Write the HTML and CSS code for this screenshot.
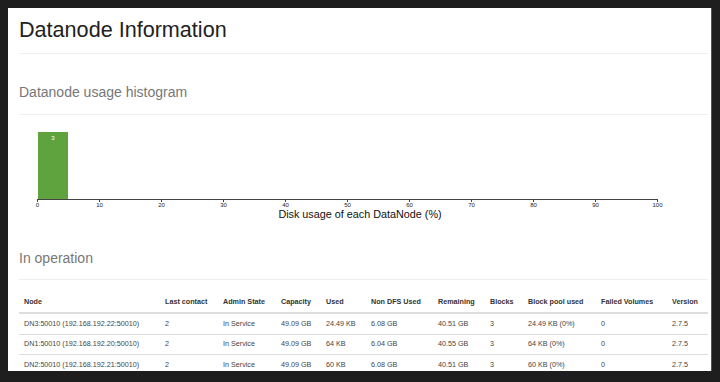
FILE: index.html
```html
<!DOCTYPE html>
<html>
<head>
	<title>Datanode Information</title>
	<link rel="stylesheet" href="styles.css">
</head>
<body>
<div class="panel">
  <div class="page-header">
    <h1>Datanode Information</h1>
  </div>

  <h2 class="section-title">Datanode usage histogram</h2>
  <svg class="histogram" width="689" height="110" viewBox="0 0 689 110">
    <g class="bar">
      <rect x="19" y="17" width="30" height="67"></rect>
      <text x="34" y="25" text-anchor="middle">3</text>
    </g>
    <g class="axis">
      <path d="M18.5,87V84.5H638.5V87"></path>
      <line x1="18.5" y1="84" x2="18.5" y2="87"></line>
      <line x1="80.5" y1="84" x2="80.5" y2="87"></line>
      <line x1="142.5" y1="84" x2="142.5" y2="87"></line>
      <line x1="204.5" y1="84" x2="204.5" y2="87"></line>
      <line x1="266.5" y1="84" x2="266.5" y2="87"></line>
      <line x1="328.5" y1="84" x2="328.5" y2="87"></line>
      <line x1="390.5" y1="84" x2="390.5" y2="87"></line>
      <line x1="452.5" y1="84" x2="452.5" y2="87"></line>
      <line x1="514.5" y1="84" x2="514.5" y2="87"></line>
      <line x1="576.5" y1="84" x2="576.5" y2="87"></line>
      <line x1="638.5" y1="84" x2="638.5" y2="87"></line>
      <g class="tick-labels" text-anchor="middle">
        <text x="18.5" y="91.5">0</text>
        <text x="80.5" y="91.5">10</text>
        <text x="142.5" y="91.5">20</text>
        <text x="204.5" y="91.5">30</text>
        <text x="266.5" y="91.5">40</text>
        <text x="328.5" y="91.5">50</text>
        <text x="390.5" y="91.5">60</text>
        <text x="452.5" y="91.5">70</text>
        <text x="514.5" y="91.5">80</text>
        <text x="576.5" y="91.5">90</text>
        <text x="638.5" y="91.5">100</text>
      </g>
      <text class="axis-label" x="341" y="103" text-anchor="middle">Disk usage of each DataNode (%)</text>
    </g>
  </svg>

  <h2 class="section-title op">In operation</h2>
  <table class="nodes">
    <colgroup>
      <col style="width:141px"><col style="width:58px"><col style="width:58px"><col style="width:45px">
      <col style="width:45px"><col style="width:67px"><col style="width:52px"><col style="width:38px">
      <col style="width:73px"><col style="width:71px"><col style="width:41px">
    </colgroup>
    <thead>
      <tr>
        <th>Node</th>
        <th>Last contact</th>
        <th>Admin State</th>
        <th>Capacity</th>
        <th>Used</th>
        <th>Non DFS Used</th>
        <th>Remaining</th>
        <th>Blocks</th>
        <th>Block pool used</th>
        <th>Failed Volumes</th>
        <th>Version</th>
      </tr>
    </thead>
    <tbody>
      <tr>
        <td>DN3:50010 (192.168.192.22:50010)</td>
        <td>2</td>
        <td>In Service</td>
        <td>49.09 GB</td>
        <td>24.49 KB</td>
        <td>6.08 GB</td>
        <td>40.51 GB</td>
        <td>3</td>
        <td>24.49 KB (0%)</td>
        <td>0</td>
        <td>2.7.5</td>
      </tr>
      <tr>
        <td>DN1:50010 (192.168.192.20:50010)</td>
        <td>2</td>
        <td>In Service</td>
        <td>49.09 GB</td>
        <td>64 KB</td>
        <td>6.04 GB</td>
        <td>40.55 GB</td>
        <td>3</td>
        <td>64 KB (0%)</td>
        <td>0</td>
        <td>2.7.5</td>
      </tr>
      <tr>
        <td>DN2:50010 (192.168.192.21:50010)</td>
        <td>2</td>
        <td>In Service</td>
        <td>49.09 GB</td>
        <td>60 KB</td>
        <td>6.08 GB</td>
        <td>40.51 GB</td>
        <td>3</td>
        <td>60 KB (0%)</td>
        <td>0</td>
        <td>2.7.5</td>
      </tr>
    </tbody>
  </table>
</div>
</body>
</html>
```
FILE: styles.css
```css
html, body {
  margin: 0;
  height: 100%;
}

body {
  background-color: #1e1e1e;
  padding: 8px 9px 0 8px;
  box-sizing: border-box;
  overflow: hidden;
  font-family: 'Liberation Sans', Arial, sans-serif;
  color: #333;
}

.panel {
  background-color: #fff;
  height: 363px;
  overflow: hidden;
  padding: 0 3px 0 11px;
  box-shadow: 1px 0 0 #555;
}

.page-header {
  padding: 10px 0 11px;
  border-bottom: 1px solid #eee;
}

h1 {
  margin: 0;
  font-size: 21.6px;
  line-height: 24px;
  font-weight: normal;
  color: #222;
}

.section-title {
  margin: 30px 0 0;
  padding-bottom: 14px;
  border-bottom: 1px solid #eee;
  font-size: 14px;
  line-height: 16px;
  font-weight: normal;
  color: #777;
}

.section-title.op {
  margin-top: 25px;
  padding-bottom: 13px;
}

.histogram {
  display: block;
}

.bar rect {
  fill: #5fa33f;
}

.bar text {
  fill: #fff;
  font-size: 6px;
}

.axis path, .axis line {
  fill: none;
  stroke: #444;
  shape-rendering: crispEdges;
}

.tick-labels text {
  font-size: 6px;
  fill: #222;
}

.axis-label {
  font-size: 10.8px;
  fill: #111;
}

.nodes {
  margin-top: 12px;
  width: 689px;
  table-layout: fixed;
  border-collapse: collapse;
  font-size: 7.2px;
  line-height: 10.2px;
}

.nodes th, .nodes td {
  padding: 4.8px 5px;
  text-align: left;
  white-space: nowrap;
}

.nodes th {
  font-weight: bold;
  color: #333;
  border-bottom: 2px solid #ddd;
}

.nodes td {
  border-top: 1px solid #ddd;
  color: #444;
}
```
